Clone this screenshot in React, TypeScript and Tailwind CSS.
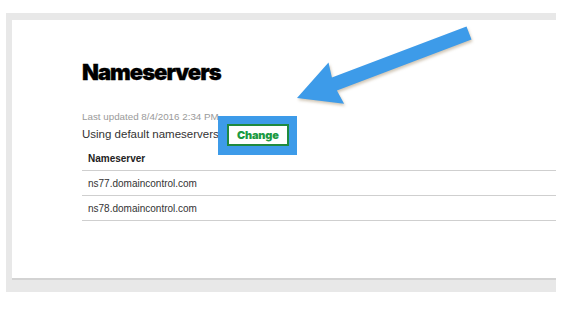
import React from 'react';

const servers = ['ns77.domaincontrol.com', 'ns78.domaincontrol.com'];

function Arrow() {
    return (
        <svg
            className="absolute left-0 top-0 pointer-events-none"
            width="569"
            height="313"
            viewBox="0 0 569 313"
            style={{ filter: 'drop-shadow(1px 2px 1.5px rgba(120, 90, 40, 0.35))' }}
        >
            <polygon
                points="297,98 328.5,62.6 331.9,77.4 466.5,26.5 471.5,39.5 336.9,90.4 344.1,103.8"
                fill="#3d9be9"
            />
        </svg>
    );
}

export default function App() {
    return (
        <div className="relative w-[569px] h-[313px] bg-white overflow-hidden" style={{ fontFamily: '"Liberation Sans", Arial, sans-serif' }}>
            {/* Gray page frame */}
            <div className="ml-[6px] mt-[13px] w-[550px] h-[279px] bg-[#e8e8e8] pt-[7px] pl-[6px] pb-[14px]">
                {/* White card */}
                <div className="h-full bg-white shadow-[0_2px_0_#d3d3d3] pl-[70px] pt-[38px]">
                    <h1
                        className="h-[28px] leading-[28px] text-[22px] font-black text-black tracking-[-1px]"
                        style={{ fontFamily: 'Inter, sans-serif', WebkitTextStroke: '0.3px #000' }}
                    >
                        Nameservers
                    </h1>

                    <p className="mt-[24px] h-[14px] leading-[14px] text-[9.8px] text-[#9a9a9a]">
                        Last updated 8/4/2016 2:34 PM
                    </p>

                    <div className="flex items-center h-[22px]">
                        <span className="text-[11.5px] text-[#333]">Using default nameservers</span>
                        <span className="relative ml-[8px]">
                            <span className="absolute -left-[9px] -right-[8px] -top-[8px] -bottom-[9px] bg-[#3d9be9]"></span>
                            <button
                                className="relative flex items-center justify-center w-[62px] h-[22px] bg-white border-2 border-[#1f8a3f] text-[11px] font-black text-[#1c9a43] tracking-[-0.2px]"
                                style={{ fontFamily: 'Inter, sans-serif' }}
                            >
                                Change
                            </button>
                        </span>
                    </div>

                    {/* Nameserver table */}
                    <div>
                        <div className="h-[25px] flex items-center pl-[6px] pt-[1px] border-b border-[#cfcfcf] text-[10px] font-bold text-[#222]">
                            Nameserver
                        </div>
                        {servers.map((s) => (
                            <div key={s} className="h-[25px] flex items-center pl-[6px] border-b border-[#cfcfcf] text-[10px] text-[#333]">
                                {s}
                            </div>
                        ))}
                    </div>
                </div>
            </div>
            <Arrow />
        </div>
    );
}
